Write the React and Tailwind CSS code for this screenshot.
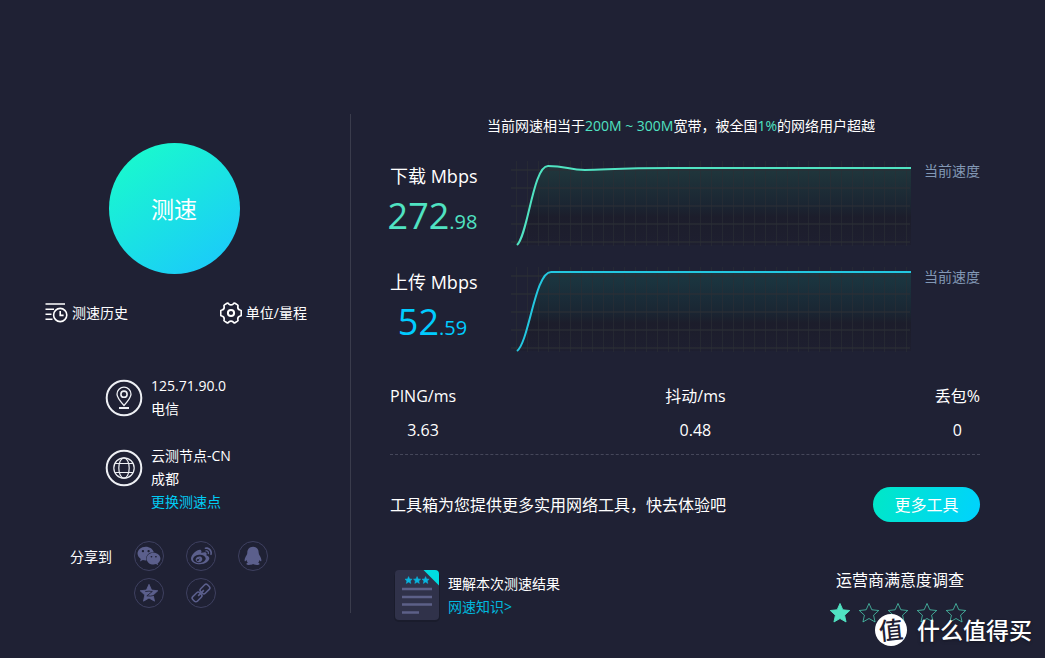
import { FaWeibo, FaWeixin } from "react-icons/fa";

const STAR = "M12 1.6 15.1 8.5 22.6 9.3 17 14.4 18.6 21.8 12 18 5.4 21.8 7 14.4 1.4 9.3 8.9 8.5Z";

function HistoryIcon() {
  return (
    <svg className="h-[22px] w-[23px] shrink-0" viewBox="0 0 23 22" fill="none" stroke="currentColor" strokeWidth="1.6" aria-hidden="true">
      <path d="M0.5 2H20M0.5 7.2H9M0.5 12.2H6.5M0.5 17.2H7.5" />
      <circle cx="15.2" cy="13" r="6.6" />
      <path d="M15.2 9V13.4H18.6" />
    </svg>
  );
}

function GearIcon() {
  return (
    <svg className="h-[22px] w-[22px] shrink-0" viewBox="0 0 22 22" fill="none" stroke="currentColor" strokeWidth="1.7" strokeLinejoin="round" aria-hidden="true">
      <path d="M7 1.3Q8 .8 8.6 1.8Q11 4 13.4 1.8Q14 .8 15 1.3L17.5 2.9Q18.3 3.5 17.9 4.5Q17.4 7.4 20.2 8Q21.3 8.2 21.3 9.2V12.8Q21.3 13.8 20.2 14Q17.4 14.6 17.9 17.5Q18.3 18.5 17.5 19.1L15 20.7Q14 21.2 13.4 20.2Q11 18 8.6 20.2Q8 21.2 7 20.7L4.5 19.1Q3.7 18.5 4.1 17.5Q4.6 14.6 1.8 14Q.7 13.8 .7 12.8V9.2Q.7 8.2 1.8 8Q4.6 7.4 4.1 4.5Q3.7 3.5 4.5 2.9Z" />
      <circle cx="11" cy="11" r="3.1" strokeWidth="2" />
    </svg>
  );
}

function PinIcon() {
  return (
    <svg className="h-[38px] w-[38px] shrink-0" viewBox="0 0 38 38" fill="none" stroke="#eef0f4" aria-hidden="true">
      <circle cx="19" cy="19" r="17.3" strokeWidth="2" />
      <path d="M19 26.500C15 22 12 18.400 12 15.200A7 7 0 0 1 26 15.200C26 18.400 23 22 19 26.500Z" strokeWidth="1.300" />
      <circle cx="19" cy="15.2" r="3.1" strokeWidth="1.6" />
      <path d="M14 29H24" strokeWidth="2" />
    </svg>
  );
}

function GlobeIcon() {
  return (
    <svg className="h-[38px] w-[38px] shrink-0" viewBox="0 0 38 38" fill="none" stroke="#eef0f4" aria-hidden="true">
      <circle cx="19" cy="19" r="17.3" strokeWidth="2" />
      <g strokeWidth="1.2">
        <circle cx="19" cy="19" r="10.2" />
        <ellipse cx="19" cy="19" rx="5.2" ry="10.2" />
        <path d="M10 14.5H28M10 23.5H28" />
      </g>
    </svg>
  );
}

function QqIcon() {
  return (
    <svg className="h-5 w-5" viewBox="0 0 20 20" fill="currentColor" aria-hidden="true">
      <path d="M10 .8C13.700 .8 15.700 3.600 15.700 6.700C15.700 7.500 16 8.200 16.300 9C17.600 11.200 18.700 13 18.300 15C18 15.800 17.300 15.200 16.500 14C16.300 15.200 15.800 16 15.200 16.700C16.500 17.200 16.700 17.700 16.500 18.300C16 19.400 11.500 19.200 10 18.100C8.500 19.200 4 19.400 3.500 18.300C3.300 17.700 3.500 17.200 4.800 16.700C4.200 16 3.700 15.200 3.500 14C2.700 15.200 2 15.800 1.700 15C1.300 13 2.400 11.200 3.700 9C4 8.200 4.300 7.500 4.300 6.700C4.300 3.600 6.300 .8 10 .8Z" />
    </svg>
  );
}

function QzoneIcon() {
  return (
    <svg className="h-5 w-5" viewBox="0 0 24 24" aria-hidden="true">
      <path d={STAR} fill="currentColor" stroke="currentColor" strokeLinejoin="round" />
      <path d="M7.5 10.3Q12 9.3 16 10.2L9.4 15.4Q14 16.3 18.4 14.8" fill="none" stroke="#1f2134" strokeWidth="1" />
    </svg>
  );
}

function ChainIcon() {
  return (
    <svg className="h-5 w-5" viewBox="0 0 20 20" fill="none" stroke="currentColor" strokeWidth="1.6" aria-hidden="true">
      <g transform="rotate(-45 10 10)">
        <rect x="-0.4" y="6.800" width="9.600" height="6.400" rx="2" />
        <rect x="10.800" y="6.800" width="9.600" height="6.400" rx="2" />
        <path d="M6 10H14" />
      </g>
    </svg>
  );
}

function ReportIcon() {
  return (
    <svg className="h-[54px] w-[48px] shrink-0" viewBox="0 0 48 54" aria-hidden="true">
      <rect x="1" y="3" width="46" height="50" rx="5" fill="#1a1c2c" />
      <path d="M6 1H32L46 15V47Q46 51 42 51H6Q2 51 2 47V5Q2 1 6 1Z" fill="#30324a" />
      <path d="M30.5 1H42Q46 1 46 5V16.5Z" fill="#00dce0" />
      {[11.5, 20, 28.5].map((x) => (
        <path key={x} transform={`translate(${x} 7) scale(.34)`} d={STAR} fill="#08b5df" stroke="#08b5df" strokeWidth="1.5" />
      ))}
      <path d="M9 20H39M9 28H39M9 35.5H39M9 43.5H26" stroke="#5c6088" strokeWidth="2.6" />
    </svg>
  );
}

function Chart({ id, color, line, glow, glowMid }) {
  return (
    <svg className="h-[86px] min-w-0 flex-1" viewBox="0 0 400 86" preserveAspectRatio="none" role="img" aria-label={id}>
      <defs>
        <linearGradient id={id} x1="0" y1="0" x2="0" y2="1">
          <stop offset="0" stopColor={glow} />
          <stop offset=".5" stopColor={glowMid} />
          <stop offset=".65" stopColor="#1c1d2b" />
          <stop offset="1" stopColor="#1e1f30" />
        </linearGradient>
      </defs>
      <path d={`${line}V85H6Z`} fill={`url(#${id})`} />
      <g stroke="#2b2e35" strokeOpacity=".6">
        {Array.from({ length: 37 }, (_, i) => (
          <path key={i} d={`M${5.5 + Math.round(i * 10.83)} 1V86`} />
        ))}
        {[10, 28, 46, 64, 82].map((y) => (
          <path key={y} d={`M0 ${y}H399`} strokeWidth="2" />
        ))}
      </g>
      <path d={line} fill="none" stroke={color} strokeWidth="2" />
    </svg>
  );
}

function SpeedRow({ label, whole, fraction, tone, ...chart }) {
  return (
    <section className="flex">
      <div className="w-[85px] shrink-0 pt-1 text-center whitespace-nowrap">
        <h2 className="text-lg leading-6">{label}</h2>
        <p className={`mt-2 flex items-baseline justify-center leading-10 ${tone}`}>
          <span className="text-4xl leading-10">{whole}</span>
          <span className="text-xl">{fraction}</span>
        </p>
      </div>
      <div className="flex min-w-0 flex-1 gap-[13px] pl-9">
        <Chart {...chart} />
        <span className="leading-[22px] text-[#8298b5]">当前速度</span>
      </div>
    </section>
  );
}

const metrics = [
  ["PING/ms", "3.63"],
  ["抖动/ms", "0.48"],
  ["丢包%", "0"],
];

const shares = [
  ["微信", <FaWeixin size={24} />],
  ["微博", <FaWeibo size={21} />],
  ["QQ", <QqIcon />],
  ["QQ空间", <QzoneIcon />],
  ["复制链接", <ChainIcon />],
];

export default function App() {
  return (
    <div className="relative flex min-h-screen items-start bg-[#1f2134] pt-[114px] text-sm text-white font-['Open_Sans','Noto_Sans_CJK_SC',sans-serif]">
      <aside className="w-[351px] shrink-0 border-r border-[#3a3c4c] pt-[29px] pb-[5px]">
        <div className="flex justify-center pr-0.5">
          <button className="flex size-[131px] items-center justify-center rounded-full bg-linear-[145deg,#19ffc8,#1bc5ff] pt-0.5 text-[23px]">测速</button>
        </div>
        <nav className="mt-7 flex justify-between pr-[43px] pl-[45px] leading-[22px]">
          <a href="#history" className="flex items-center gap-1"><HistoryIcon />测速历史</a>
          <a href="#units" className="flex items-center gap-1"><GearIcon />单位/量程</a>
        </nav>
        <div className="mt-[50px] flex gap-2 pl-[105px] leading-[23px]">
          <div className="pt-[5px]"><PinIcon /></div>
          <div>
            <p>125.71.90.0</p>
            <p>电信</p>
          </div>
        </div>
        <div className="mt-6 flex gap-2 pl-[105px] leading-[23px]">
          <div className="pt-[5px]"><GlobeIcon /></div>
          <div>
            <p>云测节点-CN</p>
            <p>成都</p>
            <a href="#node" className="text-[#00ccf5]">更换测速点</a>
          </div>
        </div>
        <div className="mt-7 flex gap-[22px] pl-[70px]">
          <span className="leading-8">分享到</span>
          <div className="grid grid-cols-3 gap-x-[22px] gap-y-[7px]">
            {shares.map(([name, icon]) => (
              <button key={name} aria-label={name} className="flex size-[30px] items-center justify-center rounded-full border border-[#3e4060] text-[#5b5f8c]">
                {icon}
              </button>
            ))}
          </div>
        </div>
      </aside>

      <main className="min-w-0 flex-1 pr-[65px] pl-[39px]">
        <p className="pr-2 text-center leading-6">
          当前网速相当于<span className="text-[#50e3c2]">200M ~ 300M</span>宽带，被全国<span className="text-[#50e3c2]">1%</span>的网络用户超越
        </p>
        <div className="mt-[22px] flex flex-col gap-5">
          <SpeedRow label="下载 Mbps" whole="272" fraction=".98" tone="text-[#50e3c2]" id="download" color="#50e3c2" glow="#20383d" glowMid="#1b2532"
            line="M6 85C17 75 22 6 37 6C55 6 58 10 74 10C95 10 105 8 160 8L300 8L400 8" />
          <SpeedRow label="上传 Mbps" whole="52" fraction=".59" tone="text-[#00ccff]" id="upload" color="#24c8e0" glow="#1b3842" glowMid="#1a2633"
            line="M6 85C18 76 24 6 40 6L400 6" />
        </div>
        <dl className="mt-8 flex justify-between border-b border-dashed border-[#45475a] pb-3 text-center text-base leading-6">
          {metrics.map(([name, value]) => (
            <div key={name}>
              <dt>{name}</dt>
              <dd className="mt-2.5">{value}</dd>
            </div>
          ))}
        </dl>
        <div className="mt-8 flex items-center justify-between text-base">
          <p>工具箱为您提供更多实用网络工具，快去体验吧</p>
          <button className="h-[35px] w-[107px] rounded-full bg-linear-[110deg,#00e8c6,#00d2ff]">更多工具</button>
        </div>
        <div className="mt-[46px] flex justify-between">
          <div className="flex gap-1.5 pt-px pl-[3px]">
            <ReportIcon />
            <div className="pt-[3px] pl-px leading-[23px]">
              <p>理解本次测速结果</p>
              <a href="#knowledge" className="text-[#00b9df]">网速知识&gt;</a>
            </div>
          </div>
          <div className="pr-[13px]">
            <h2 className="pl-1 text-center text-base leading-6">运营商满意度调查</h2>
            <div className="mt-2.5 flex gap-[7px] text-[#50e3c2]">
              {[1, 2, 3, 4, 5].map((n) => (
                <button key={n} aria-label={`${n}星`}>
                  <svg className="size-[22px]" viewBox="0 0 24 24" stroke="currentColor" strokeOpacity={n === 1 ? 1 : 0.75} fill={n === 1 ? "currentColor" : "none"}>
                    <path d={STAR} />
                  </svg>
                </button>
              ))}
            </div>
          </div>
        </div>
      </main>

      <div className="absolute right-[13px] bottom-3 flex items-center gap-2.5">
        <span className="flex size-8 items-center justify-center rounded-full bg-white text-2xl font-medium text-[#1f2134]">
          <span className="-rotate-6 leading-8">值</span>
        </span>
        <span className="text-[23px] leading-8 font-medium text-shadow-md">什么值得买</span>
      </div>
    </div>
  );
}
